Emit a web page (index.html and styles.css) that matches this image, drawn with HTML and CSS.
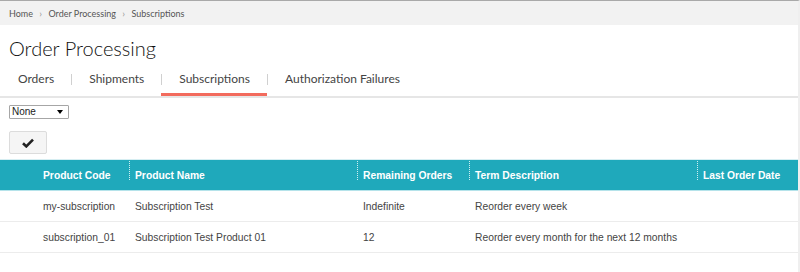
FILE: index.html
```html
<!DOCTYPE html>
<html lang="en">
<head>
    <meta charset="UTF-8">
    <meta name="viewport" content="width=device-width, initial-scale=1.0">
    <title>Order Processing - Subscriptions</title>
    <link rel="stylesheet" href="styles.css">
</head>
<body>
    <!-- Breadcrumb -->
    <div class="breadcrumb">
        <span>Home</span>
        <span class="crumb-sep">&rsaquo;</span>
        <span>Order Processing</span>
        <span class="crumb-sep">&rsaquo;</span>
        <span>Subscriptions</span>
    </div>

    <h1 class="page-title">Order Processing</h1>

    <div class="tabs">
        <div class="tab">Orders</div>
        <div class="tab">Shipments</div>
        <div class="tab active">Subscriptions</div>
        <div class="tab">Authorization Failures</div>
    </div>

    <div class="toolbar">
        <select class="filter-select">
            <option>None</option>
        </select>
        <button class="apply-btn" title="Apply">
            <svg width="12" height="10" viewBox="0 0 12 10">
                <path d="M1 5.2 L4.3 8.4 L11 1.6" fill="none" stroke="#222" stroke-width="2.6" stroke-linejoin="miter"/>
            </svg>
        </button>
    </div>

    <div class="grid">
        <div class="grid-row grid-head">
            <div class="cell"></div>
            <div class="cell">Product Code</div>
            <div class="cell sep">Product Name</div>
            <div class="cell sep">Remaining Orders</div>
            <div class="cell sep">Term Description</div>
            <div class="cell sep">Last Order Date</div>
        </div>
        <div class="grid-row">
            <div class="cell"></div>
            <div class="cell">my-subscription</div>
            <div class="cell">Subscription Test</div>
            <div class="cell">Indefinite</div>
            <div class="cell">Reorder every week</div>
            <div class="cell"></div>
        </div>
        <div class="grid-row">
            <div class="cell"></div>
            <div class="cell">subscription_01</div>
            <div class="cell">Subscription Test Product 01</div>
            <div class="cell">12</div>
            <div class="cell">Reorder every month for the next 12 months</div>
            <div class="cell"></div>
        </div>
    </div>
</body>
</html>
```

FILE: styles.css
```css
body {
    margin: 0;
    height: 271px;
    overflow: hidden;
    font-family: 'Lato', 'Open Sans', sans-serif;
    color: #222;
    background: #fff;
    border-top: 1px solid #a9a9a9;
    border-right: 2px solid #efefef;
}

.breadcrumb {
    height: 24px;
    line-height: 24px;
    padding-left: 9px;
    background: #f2f2f2;
    font-size: 9px;
    color: #555;
}

.crumb-sep {
    margin: 0 4px;
    color: #999;
    font-size: 10px;
}

.page-title {
    margin: 11px 0 0 9px;
    font-size: 20px;
    font-weight: 300;
    line-height: 24px;
    color: #111;
}

.tabs {
    display: flex;
    margin-top: 6px;
    border-bottom: 2px solid #e6e6e6;
}

.tab {
    position: relative;
    padding: 0 17px 0 18px;
    height: 30px;
    line-height: 26px;
    font-size: 12px;
    color: #444;
    border-bottom: 3px solid transparent;
    box-sizing: border-box;
}

.tab + .tab::before {
    content: "";
    position: absolute;
    left: 0;
    top: 8px;
    height: 11px;
    border-left: 1px solid #d0d0d0;
}

.tab.active {
    border-bottom-color: #f26b5d;
}

.toolbar {
    padding: 7px 0 0 9px;
    display: flex;
    flex-direction: column;
    align-items: flex-start;
    gap: 12px;
}

.filter-select {
    appearance: none;
    width: 60px;
    height: 14px;
    padding: 0 0 0 2px;
    font-family: 'Liberation Sans', Arial, sans-serif;
    font-size: 10px;
    line-height: 12px;
    color: #222;
    border: 1px solid #a6a6a6;
    border-radius: 1px;
    background: #fff url("data:image/svg+xml;utf8,<svg xmlns='http://www.w3.org/2000/svg' width='6' height='4'><path d='M0 0h6L3 4z' fill='%23000'/></svg>") no-repeat right 5px center;
}

.apply-btn {
    width: 38px;
    height: 23px;
    padding: 0;
    background: #f5f5f5;
    border: 1px solid #dcdcdc;
    border-radius: 2px;
    display: flex;
    align-items: center;
    justify-content: center;
}

.grid {
    margin-top: 5px;
    font-family: 'Liberation Sans', Arial, sans-serif;
    font-size: 10.3px;
    color: #444;
}

.grid-row {
    display: grid;
    grid-template-columns: 37px 92px 228px 112px 228px 1fr;
    box-sizing: border-box;
    height: 31px;
    align-items: center;
    border-bottom: 1px solid #ececec;
}

.grid-head {
    height: 32px;
    background: #1fa9bb;
    color: #fff;
    font-weight: bold;
    border-top: 1px solid #d6eef2;
    border-bottom: 1px solid #b5e3ea;
}

.cell {
    padding-left: 6px;
    white-space: nowrap;
    position: relative;
}

.grid-head .sep::before {
    content: "";
    position: absolute;
    left: 0;
    top: -9px;
    height: 19px;
    border-left: 1px dotted rgba(255, 255, 255, 0.8);
}
```
